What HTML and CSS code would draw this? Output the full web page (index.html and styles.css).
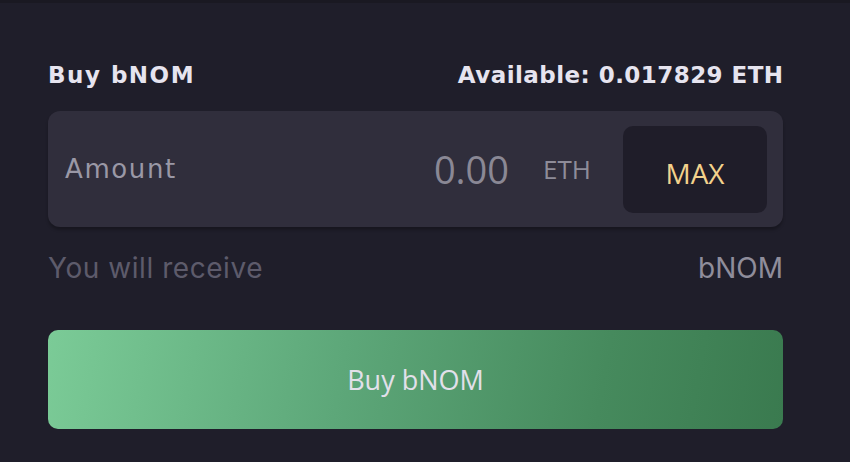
FILE: index.html
```html
<!DOCTYPE html>
<html>
<head>
<meta charset="utf-8">
<link rel="stylesheet" href="styles.css">
</head>
<body>
<div class="topbar"></div>
<main class="panel">
  <div class="head">
    <span class="title">Buy bNOM</span>
    <span class="avail">Available: 0.017829 ETH</span>
  </div>
  <div class="field">
    <span class="label">Amount</span>
    <span class="value">0.00</span>
    <span class="unit">ETH</span>
    <button class="max">MAX</button>
  </div>
  <div class="receive">
    <span class="rlabel">You will receive</span>
    <span class="rvalue">bNOM</span>
  </div>
  <button class="buy">Buy bNOM</button>
</main>
</body>
</html>
```
FILE: styles.css
```css
html, body {
  margin: 0;
  padding: 0;
  background: #1f1e2a;
  width: 850px;
  height: 462px;
  overflow: hidden;
}
.topbar {
  height: 3px;
  background: #1a1922;
}
.panel {
  padding: 0 67px 0 48px;
  display: flex;
  flex-direction: column;
}
.head {
  display: flex;
  justify-content: space-between;
  align-items: baseline;
  margin-top: 57px;
  height: 30px;
  line-height: 30px;
  font-family: "DejaVu Sans", sans-serif;
  font-weight: 700;
  font-size: 23px;
  color: #e6e4ef;
}
.title { letter-spacing: 1.5px; }
.avail { letter-spacing: 0.45px; margin-right: -0.5px; }
.field {
  margin-top: 21px;
  height: 116px;
  background: #302e3c;
  border-radius: 12px;
  box-shadow: 0 3px 3px rgba(0,0,0,0.25);
  display: flex;
  align-items: center;
  padding: 0 16px 0 17px;
  box-sizing: border-box;
}
.label {
  flex: 1;
  font-family: "DejaVu Sans", sans-serif;
  font-size: 26px;
  letter-spacing: 1.6px;
  color: #9a98a6;
}
.value {
  font-family: "Open Sans", sans-serif;
  font-size: 38px;
  color: #8a8895;
}
.unit {
  margin-left: 34px;
  font-family: "Open Sans", sans-serif;
  font-size: 26px;
  color: #8e8c99;
}
.max {
  margin-left: 32px;
  width: 144px;
  height: 87px;
  border: 0;
  border-radius: 10px;
  background: #1f1d29;
  color: #f3d28c;
  font-family: "Open Sans", sans-serif;
  font-size: 28px;
  padding: 8px 0 0 0;
}
.receive {
  margin-top: 24px;
  display: flex;
  justify-content: space-between;
  line-height: 34px;
  font-family: "Inter", sans-serif;
  font-size: 28px;
}
.rlabel { color: #5d5b6b; letter-spacing: 0.55px; }
.rvalue { color: #8f8d9b; }
.buy {
  margin-top: 45px;
  height: 99px;
  border: 0;
  border-radius: 10px;
  background: linear-gradient(100deg, #7bcb97 0%, #5da779 40%, #468a5d 75%, #3a7a4f 100%);
  color: #e2e0ea;
  font-family: "Open Sans", sans-serif;
  font-size: 27px;
  padding: 0;
}
```
